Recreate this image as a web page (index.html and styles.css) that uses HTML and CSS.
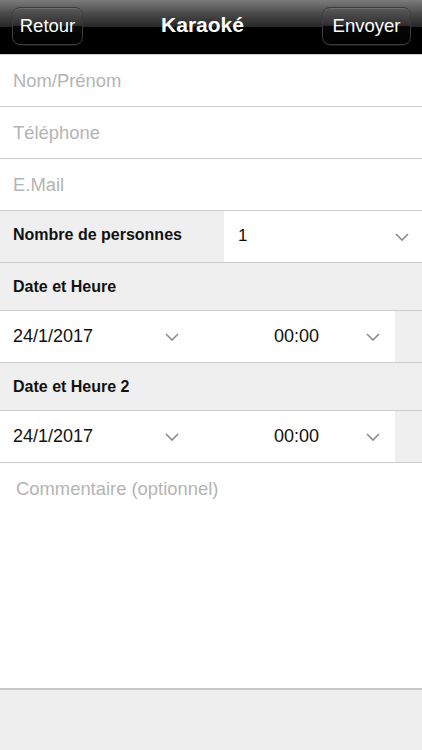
FILE: index.html
```html
<!DOCTYPE html>
<html lang="fr">
<head>
<meta charset="utf-8">
<title>Karaoké</title>
<link rel="stylesheet" href="styles.css">
</head>
<body>
<div class="screen">
  <header class="topbar">
    <button class="bar-btn btn-back">Retour</button>
    <h1 class="title">Karaoké</h1>
    <button class="bar-btn btn-send">Envoyer</button>
  </header>

  <div class="field"><span class="placeholder">Nom/Prénom</span></div>
  <div class="field"><span class="placeholder">Téléphone</span></div>
  <div class="field"><span class="placeholder">E.Mail</span></div>

  <div class="select-row">
    <div class="select-label">Nombre de personnes</div>
    <div class="select-value">
      <span class="value">1</span>
      <svg class="chev" width="14" height="8" viewBox="0 0 14 8"><path d="M1 1 L7 7 L13 1" fill="none" stroke="#8a8a8a" stroke-width="1.6"/></svg>
    </div>
  </div>

  <div class="section">Date et Heure</div>
  <div class="dt-row">
    <div class="dt-main">
      <div class="dt-date">
        <span class="value">24/1/2017</span>
        <svg class="chev" width="14" height="8" viewBox="0 0 14 8"><path d="M1 1 L7 7 L13 1" fill="none" stroke="#8a8a8a" stroke-width="1.6"/></svg>
      </div>
      <div class="dt-time">
        <span class="value">00:00</span>
        <svg class="chev" width="14" height="8" viewBox="0 0 14 8"><path d="M1 1 L7 7 L13 1" fill="none" stroke="#8a8a8a" stroke-width="1.6"/></svg>
      </div>
    </div>
    <div class="dt-side"></div>
  </div>

  <div class="section">Date et Heure 2</div>
  <div class="dt-row">
    <div class="dt-main">
      <div class="dt-date">
        <span class="value">24/1/2017</span>
        <svg class="chev" width="14" height="8" viewBox="0 0 14 8"><path d="M1 1 L7 7 L13 1" fill="none" stroke="#8a8a8a" stroke-width="1.6"/></svg>
      </div>
      <div class="dt-time">
        <span class="value">00:00</span>
        <svg class="chev" width="14" height="8" viewBox="0 0 14 8"><path d="M1 1 L7 7 L13 1" fill="none" stroke="#8a8a8a" stroke-width="1.6"/></svg>
      </div>
    </div>
    <div class="dt-side"></div>
  </div>

  <div class="comment"><span class="placeholder">Commentaire (optionnel)</span></div>
  <div class="footer"></div>
</div>
</body>
</html>
```

FILE: styles.css
```css
* { box-sizing: border-box; }
html, body { margin: 0; padding: 0; }
body {
  font-family: "Liberation Sans", Arial, Helvetica, sans-serif;
  background: #fff;
  color: #111;
}
.screen {
  width: 422px;
  height: 750px;
  display: flex;
  flex-direction: column;
  overflow: hidden;
}
.topbar {
  height: 55px;
  flex: 0 0 55px;
  display: flex;
  align-items: center;
  padding: 0 11px 1px 12px;
  background: linear-gradient(to bottom, #7c7c7c 0%, #4a4a4a 25%, #262626 50%, #000 51%, #000 100%);
  border-bottom: 1px solid #cfcfcf;
}
.bar-btn {
  height: 38px;
  border: 1px solid #3c3c3c;
  border-radius: 8px;
  background: linear-gradient(to bottom, #5a5a5a 0%, #2e2e2e 48%, #070707 52%, #000 100%);
  box-shadow: inset 0 1px 0 rgba(255,255,255,0.12), 0 1px 0 rgba(255,255,255,0.08);
  color: #fff;
  font-family: "Liberation Sans", Arial, sans-serif;
  font-size: 18.5px;
  padding: 0;
  margin-top: -2px;
}
.btn-back { width: 71px; }
.btn-send { width: 89px; }
.title {
  flex: 1;
  margin: 0;
  text-align: center;
  color: #fff;
  font-size: 21px;
  font-weight: bold;
  margin-top: -3px;
}
.field {
  height: 52px;
  flex: 0 0 52px;
  border-bottom: 1px solid #cdcdcd;
  display: flex;
  align-items: center;
  padding-left: 13px;
}
.placeholder {
  color: #b4b4b4;
  font-size: 18.4px;
}
.value {
  font-size: 18px;
  color: #111;
}
.select-row {
  height: 52px;
  flex: 0 0 52px;
  display: grid;
  grid-template-columns: 224px 1fr;
  border-bottom: 1px solid #cdcdcd;
}
.select-label {
  background: #efefef;
  display: flex;
  align-items: center;
  padding-left: 13px;
  padding-bottom: 4px;
  font-size: 16px;
  font-weight: bold;
}
.select-value {
  display: flex;
  align-items: center;
  justify-content: space-between;
  padding: 0 13px 0 14px;
  padding-bottom: 2px;
}
.select-value .value { font-size: 17px; }
.select-value .chev { margin-top: 3px; }
.section {
  height: 48px;
  flex: 0 0 48px;
  background: #efefef;
  border-bottom: 1px solid #cdcdcd;
  display: flex;
  align-items: center;
  padding-left: 13px;
  padding-bottom: 0;
  font-size: 16px;
  font-weight: bold;
}
.dt-row {
  height: 52px;
  flex: 0 0 52px;
  display: flex;
  border-bottom: 1px solid #cdcdcd;
}
.dt-main {
  width: 395px;
  display: grid;
  grid-template-columns: 192px 1fr;
}
.dt-date, .dt-time {
  display: flex;
  align-items: center;
  justify-content: space-between;
}
.dt-date { padding: 0 13px 0 13px; }
.dt-time { padding: 0 15px 0 82px; }
.dt-side {
  flex: 1;
  background: #efefef;
}
.comment {
  flex: 0 0 227px;
  border-bottom: 2px solid #c9c9c9;
  padding: 15px 0 0 16px;
}
.footer {
  flex: 1;
  background: #eeeeee;
}
```
